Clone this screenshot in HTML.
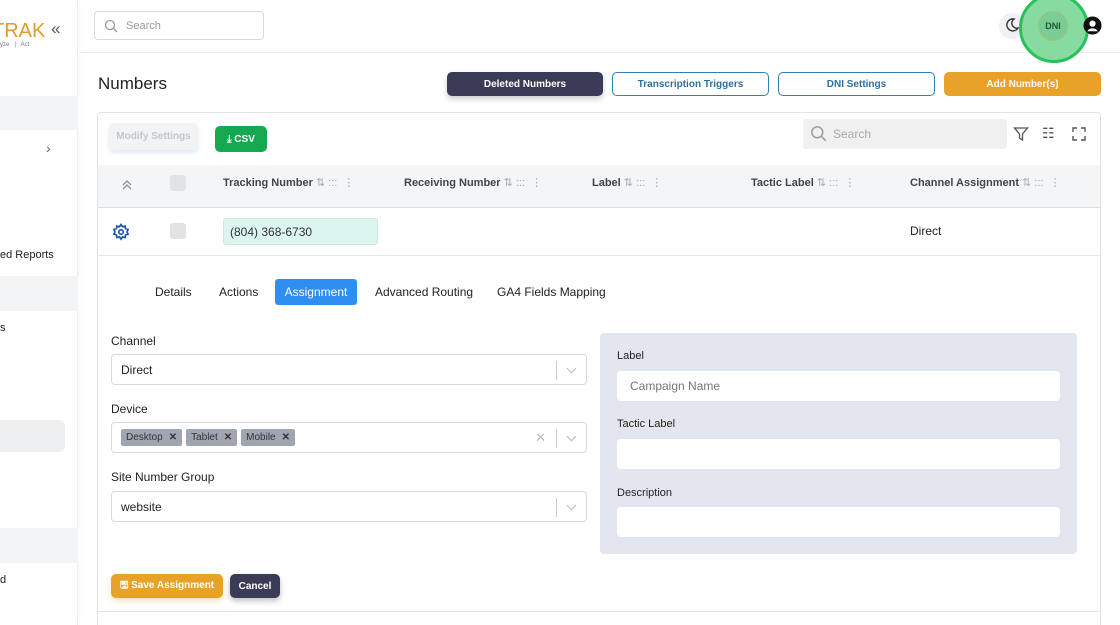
<!DOCTYPE html>
<html><head><style>
*{box-sizing:border-box;margin:0;padding:0}
html,body{width:1120px;height:625px;overflow:hidden}
body{background:#fff;font-family:"Liberation Sans",sans-serif;position:relative;color:#222}
.a{position:absolute}
.btn{position:absolute;border-radius:5px;font-size:10px;font-weight:bold;display:flex;align-items:center;justify-content:center}
.inp{position:absolute;border:1px solid #d9d9d9;border-radius:4px;background:#fff;font-size:12px;display:flex;align-items:center;padding-left:9px}
.lbl{position:absolute;font-size:12px;color:#222}
.th{position:absolute;top:176px;font-size:11px;font-weight:bold;color:#444}
.th span{color:#aaa;font-weight:normal;margin-left:3px}
.tag{display:inline-block;background:#a0a6b1;border-radius:2px;font-size:10px;padding:3px 5px;margin-right:4px;color:#333}
.tag b{margin-left:6px}
.chev{position:absolute;right:0;top:6px;width:30px;height:19px;border-left:1px solid #ccc}
.chev:after{content:"";position:absolute;left:11px;top:4px;width:6px;height:6px;border-right:1.3px solid #bbb;border-bottom:1.3px solid #bbb;transform:rotate(45deg)}
</style></head><body>
<!-- sidebar -->
<div class="a" style="left:0;top:0;width:78px;height:625px;background:#fff;border-right:1px solid #eee;box-shadow:1px 0 4px rgba(0,0,0,.04)"></div>
<div class="a" style="left:-8px;top:20px;font-size:20px;color:#e39a2c">TRAK</div>
<div class="a" style="left:0;top:42px;font-size:6px;color:#777">yze &nbsp; | &nbsp; Act</div>
<div class="a" style="left:51px;top:19px;font-size:17px;color:#555">«</div>
<div class="a" style="left:0;top:96px;width:78px;height:34px;background:#f3f4f6"></div>
<div class="a" style="left:46px;top:140px;font-size:14px;color:#666">›</div>
<div class="a" style="left:0;top:249px;font-size:11px">ed Reports</div>
<div class="a" style="left:0;top:276px;width:78px;height:35px;background:#f3f4f6"></div>
<div class="a" style="left:0;top:322px;font-size:11px">s</div>
<div class="a" style="left:0;top:420px;width:65px;height:32px;background:#eeeff1;border-radius:0 6px 6px 0"></div>
<div class="a" style="left:0;top:528px;width:78px;height:35px;background:#f3f4f6"></div>
<div class="a" style="left:0;top:574px;font-size:11px">d</div>
<!-- topbar -->
<div class="a" style="left:79px;top:52px;width:1041px;border-top:1px solid #eee"></div>
<div class="inp" style="left:94px;top:11px;width:170px;height:29px;color:#999;font-size:11px;padding-left:9px"><svg width="14" height="14" viewBox="0 0 14 14" style="margin-right:8px"><circle cx="6" cy="6" r="4.5" fill="none" stroke="#999" stroke-width="1.3"/><path d="M9.5 9.5L13 13" stroke="#999" stroke-width="1.3"/></svg>Search</div>
<div class="a" style="left:999px;top:13px;width:26px;height:26px;border-radius:50%;background:#f0f1f4"></div>
<svg class="a" style="left:1004px;top:17px" width="16" height="16" viewBox="0 0 16 16"><path d="M10 2a6 6 0 1 0 4 9A5 5 0 0 1 10 2z" fill="none" stroke="#333" stroke-width="1.4"/></svg>
<div class="a" style="left:1019px;top:-7px;width:70px;height:70px;border-radius:50%;background:#86dba0;border:3px solid #28c05a"></div>
<div class="a" style="left:1038px;top:11px;width:30px;height:30px;border-radius:50%;background:#7ccd95;border:1px solid #9fc27a;font-size:9px;font-weight:bold;color:#1e5a36;display:flex;align-items:center;justify-content:center">DNI</div>
<svg class="a" style="left:1083px;top:16px" width="19" height="19" viewBox="0 0 20 20"><circle cx="10" cy="10" r="9.5" fill="#111"/><circle cx="10" cy="8" r="3.3" fill="#fff"/><path d="M4.5 16a6 5 0 0 1 11 0" fill="#fff"/></svg>
<!-- title + buttons -->
<div class="a" style="left:98px;top:74px;font-size:17px;color:#222">Numbers</div>
<div class="btn" style="left:447px;top:72px;width:156px;height:24px;background:#3a3c57;color:#fff;box-shadow:0 3px 6px rgba(0,0,0,.2)">Deleted Numbers</div>
<div class="btn" style="left:612px;top:72px;width:157px;height:24px;border:1px solid #2f7fb5;color:#2f6f9e;background:#fff">Transcription Triggers</div>
<div class="btn" style="left:778px;top:72px;width:157px;height:24px;border:1px solid #2f7fb5;color:#2f6f9e;background:#fff">DNI Settings</div>
<div class="btn" style="left:944px;top:72px;width:157px;height:24px;background:#e8a228;color:#fff">Add Number(s)</div>
<!-- card -->
<div class="a" style="left:97px;top:112px;width:1004px;height:540px;background:#fff;border:1px solid #e3e3e3;border-radius:4px"></div>
<div class="btn" style="left:109px;top:123px;width:89px;height:27px;background:#f2f3f5;color:#c5c7cb;box-shadow:0 3px 5px rgba(150,190,240,.3)">Modify Settings</div>
<div class="btn" style="left:215px;top:126px;width:52px;height:26px;background:#16a751;color:#fff;font-size:10px">⤓ CSV</div>
<div class="a" style="left:803px;top:119px;width:204px;height:30px;background:#f0f0f0;border-radius:3px;font-size:12px;color:#aaa;padding:8px 0 0 30px">Search</div>
<svg class="a" style="left:810px;top:125px" width="17" height="17" viewBox="0 0 14 14"><circle cx="6" cy="6" r="4.5" fill="none" stroke="#999" stroke-width="1.2"/><path d="M9.5 9.5L13 13" stroke="#999" stroke-width="1.2"/></svg>
<svg class="a" style="left:1013px;top:126px" width="16" height="16" viewBox="0 0 16 16"><path d="M1.5 2h13l-5 6v6l-3-2V8z" fill="none" stroke="#555" stroke-width="1.3"/></svg>
<div class="a" style="left:1042px;top:125px;font-size:14px;color:#555">☷</div>
<svg class="a" style="left:1072px;top:127px" width="14" height="14" viewBox="0 0 14 14" fill="none" stroke="#555" stroke-width="1.4"><path d="M1 5V1h4M9 1h4v4M13 9v4H9M5 13H1V9"/></svg>
<!-- header row -->
<div class="a" style="left:98px;top:165px;width:1002px;height:43px;background:#f4f5f7;border-bottom:1px solid #ddd"></div>
<svg class="a" style="left:121px;top:179px" width="12" height="12" viewBox="0 0 12 12" fill="none" stroke="#888" stroke-width="1.2"><path d="M2 6l4-4 4 4M2 10l4-4 4 4"/></svg>
<div class="a" style="left:170px;top:175px;width:16px;height:16px;background:#e2e3e5;border-radius:3px"></div>
<div class="th" style="left:223px">Tracking Number<span>⇅ ::: &nbsp;⋮</span></div>
<div class="th" style="left:404px">Receiving Number<span>⇅ ::: &nbsp;⋮</span></div>
<div class="th" style="left:592px">Label<span>⇅ ::: &nbsp;⋮</span></div>
<div class="th" style="left:751px">Tactic Label<span>⇅ ::: &nbsp;⋮</span></div>
<div class="th" style="left:910px">Channel Assignment<span>⇅ ::: &nbsp;⋮</span></div>
<!-- data row -->
<svg class="a" style="left:112px;top:223px" width="18" height="18" viewBox="0 0 24 24" fill="none" stroke="#1a56b0" stroke-width="2.2"><circle cx="12" cy="12" r="3"/><path d="M12 2l2 3 3.5-1 .5 3.5 3.5 1-1.5 3.5 1.5 3-3.5 1-.5 3.5-3.5-1-2 3-2-3-3.5 1-.5-3.5-3.5-1L4 12 2.5 8.5l3.5-1L6.5 4 10 5z"/></svg>
<div class="a" style="left:170px;top:223px;width:16px;height:16px;background:#e2e3e5;border-radius:3px"></div>
<div class="a" style="left:223px;top:218px;width:155px;height:27px;background:#dcf5ef;border:1px solid #cde8e0;border-radius:3px;font-size:12px;color:#333;padding:6px 0 0 6px">(804) 368-6730</div>
<div class="a" style="left:910px;top:224px;font-size:12px">Direct</div>
<div class="a" style="left:98px;top:255px;width:1002px;border-top:1px solid #e5e5e5"></div>
<!-- tabs -->
<div class="a" style="left:155px;top:285px;font-size:12px">Details</div>
<div class="a" style="left:219px;top:285px;font-size:12px">Actions</div>
<div class="a" style="left:275px;top:279px;width:82px;height:26px;background:#2f8ff0;border-radius:3px;color:#fff;font-size:12px;text-align:center;line-height:26px">Assignment</div>
<div class="a" style="left:375px;top:285px;font-size:12px">Advanced Routing</div>
<div class="a" style="left:497px;top:285px;font-size:12px">GA4 Fields Mapping</div>
<!-- left form -->
<div class="lbl" style="left:111px;top:334px">Channel</div>
<div class="inp" style="left:111px;top:354px;width:476px;height:31px">Direct<div class="chev"></div></div>
<div class="lbl" style="left:111px;top:402px">Device</div>
<div class="inp" style="left:111px;top:422px;width:476px;height:31px;padding-left:9px"><span class="tag">Desktop<b>✕</b></span><span class="tag">Tablet<b>✕</b></span><span class="tag">Mobile<b>✕</b></span><div style="position:absolute;right:40px;top:7px;color:#bbb;font-size:13px">✕</div><div class="chev"></div></div>
<div class="lbl" style="left:111px;top:470px">Site Number Group</div>
<div class="inp" style="left:111px;top:491px;width:476px;height:31px">website<div class="chev"></div></div>
<div class="btn" style="left:111px;top:574px;width:112px;height:24px;background:#e8a228;color:#fff;box-shadow:0 3px 6px rgba(232,162,40,.3)">🖫 Save Assignment</div>
<div class="btn" style="left:230px;top:574px;width:50px;height:24px;background:#3a3c57;color:#fff;box-shadow:0 3px 6px rgba(0,0,0,.25)">Cancel</div>
<div class="a" style="left:98px;top:611px;width:1002px;border-top:1px solid #e5e5e5"></div>
<!-- right panel -->
<div class="a" style="left:600px;top:333px;width:477px;height:221px;background:#e2e7ef;border-radius:4px"></div>
<div class="lbl" style="left:617px;top:350px;font-size:11px">Label</div>
<div class="inp" style="left:617px;top:371px;width:443px;height:30px;border:none;color:#777;padding-left:13px">Campaign Name</div>
<div class="lbl" style="left:617px;top:418px;font-size:11px">Tactic Label</div>
<div class="inp" style="left:617px;top:439px;width:443px;height:30px;border:none"></div>
<div class="lbl" style="left:617px;top:487px;font-size:11px">Description</div>
<div class="inp" style="left:617px;top:507px;width:443px;height:30px;border:none"></div>
</body></html>
